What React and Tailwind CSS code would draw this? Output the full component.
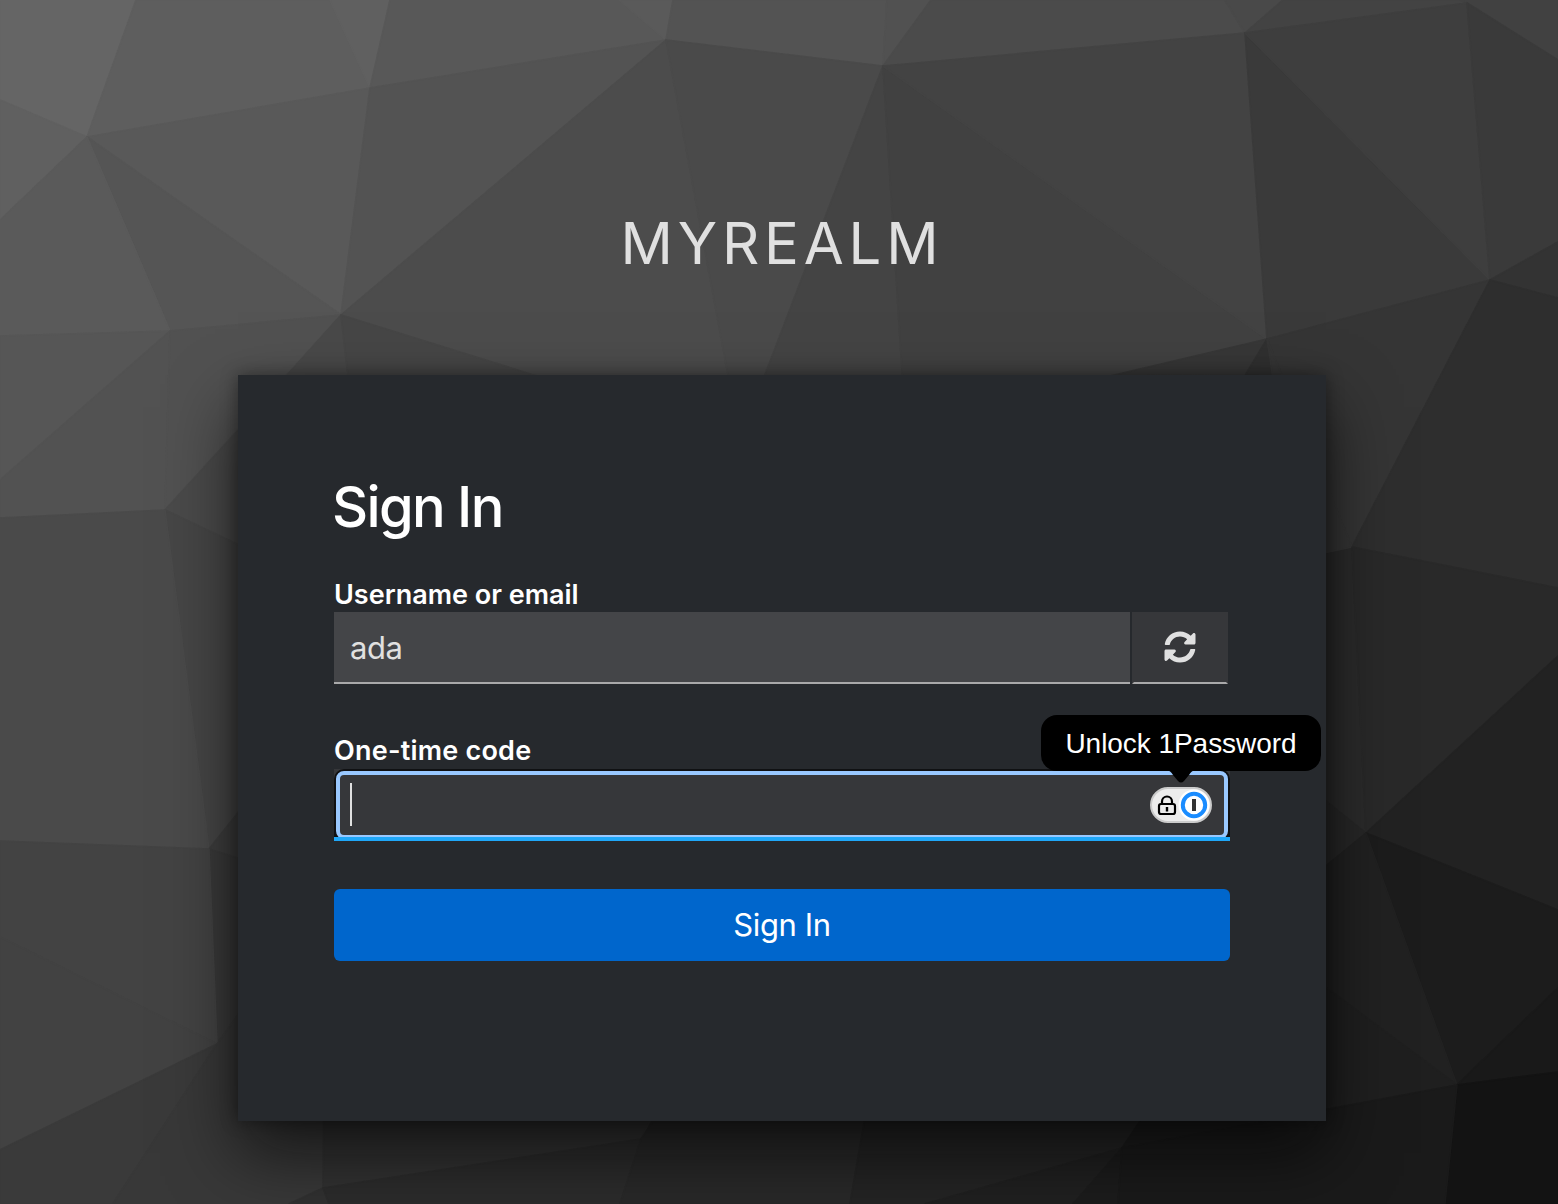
import React, { useState } from 'react';
import { FaSyncAlt } from 'react-icons/fa';

const facets = [
  { points: '0,0 136,0 87,137 0,100', fill: '#656565' },
  { points: '0,100 87,137 0,220', fill: '#606060' },
  { points: '136,0 330,0 370,88 87,137', fill: '#5e5e5e' },
  { points: '330,0 390,0 370,88', fill: '#606060' },
  { points: '390,0 619,0 666,40 370,88', fill: '#585858' },
  { points: '619,0 673,0 666,40', fill: '#5a5a5a' },
  { points: '673,0 887,0 883,66 666,40', fill: '#535353' },
  { points: '887,0 931,0 883,66', fill: '#515151' },
  { points: '931,0 1225,0 1245,33 883,66', fill: '#4b4b4b' },
  { points: '1225,0 1283,0 1245,33', fill: '#494949' },
  { points: '1283,0 1460,0 1467,3 1245,33', fill: '#434343' },
  { points: '1460,0 1558,0 1558,60 1467,3', fill: '#414141' },
  { points: '87,137 370,88 341,315', fill: '#595959' },
  { points: '87,137 341,315 170,331', fill: '#555555' },
  { points: '0,220 87,137 170,331 0,336', fill: '#5a5a5a' },
  { points: '370,88 666,40 341,315', fill: '#535353' },
  { points: '341,315 666,40 740,440', fill: '#4c4c4c' },
  { points: '666,40 883,66 740,440', fill: '#4a4a4a' },
  { points: '883,66 910,500 740,440', fill: '#444444' },
  { points: '883,66 1267,339 906,435', fill: '#414141' },
  { points: '883,66 1245,33 1267,339', fill: '#434343' },
  { points: '1245,33 1490,280 1267,339', fill: '#3a3a3a' },
  { points: '1245,33 1467,3 1490,280', fill: '#3e3e3e' },
  { points: '1467,3 1558,60 1558,242 1490,280', fill: '#3a3a3a' },
  { points: '1490,280 1558,242 1558,298', fill: '#333333' },
  { points: '1267,339 1245,375 1110,376', fill: '#373737' },
  { points: '1267,339 1281,380 1240,384', fill: '#303030' },
  { points: '1267,339 1490,280 1352,547', fill: '#353535' },
  { points: '1490,280 1558,298 1558,588 1352,547', fill: '#2e2e2e' },
  { points: '0,336 170,331 0,480', fill: '#565656' },
  { points: '0,480 170,331 165,510 0,518', fill: '#525252' },
  { points: '170,331 341,315 165,510', fill: '#515151' },
  { points: '341,315 353,400 260,405', fill: '#494949' },
  { points: '341,315 540,377 350,395', fill: '#464646' },
  { points: '165,510 260,406 260,555', fill: '#4a4a4a' },
  { points: '165,510 260,555 260,790 209,849', fill: '#464646' },
  { points: '0,518 165,510 209,849 0,841', fill: '#4a4a4a' },
  { points: '209,849 260,785 260,865', fill: '#3e3e3e' },
  { points: '209,849 260,865 260,985 217,1044', fill: '#3a3a3a' },
  { points: '0,841 209,849 217,1044 0,937', fill: '#434343' },
  { points: '0,937 217,1044 0,1150', fill: '#424242' },
  { points: '0,1150 217,1044 113,1204 0,1204', fill: '#3a3a3a' },
  { points: '217,1044 260,985 324,1100 323,1188 289,1204 113,1204', fill: '#383838' },
  { points: '289,1204 323,1188 329,1204', fill: '#313131' },
  { points: '324,1100 660,1100 641,1139 323,1188', fill: '#323232' },
  { points: '323,1188 641,1139 620,1204 329,1204', fill: '#2c2c2c' },
  { points: '641,1139 668,1100 868,1100 850,1204 620,1204', fill: '#292929' },
  { points: '868,1100 1154,1100 1122,1148 925,1204 850,1204', fill: '#242424' },
  { points: '1122,1148 1073,1204 925,1204', fill: '#202020' },
  { points: '1122,1148 1118,1204 1073,1204', fill: '#1c1c1c' },
  { points: '1154,1100 1300,1100 1300,1115 1122,1148', fill: '#1c1c1c' },
  { points: '1300,542 1352,547 1366,833 1300,784', fill: '#2b2b2b' },
  { points: '1267,339 1352,547 1300,558', fill: '#353535' },
  { points: '1352,547 1558,588 1558,656 1366,833', fill: '#292929' },
  { points: '1366,833 1558,656 1558,910', fill: '#222222' },
  { points: '1300,780 1366,833 1300,887', fill: '#272727' },
  { points: '1366,833 1558,910 1558,988 1457,1085', fill: '#1c1c1c' },
  { points: '1300,887 1366,833 1457,1085 1300,968', fill: '#212121' },
  { points: '1300,968 1457,1085 1300,1114', fill: '#1f1f1f' },
  { points: '1457,1085 1558,988 1558,1072', fill: '#191919' },
  { points: '1457,1085 1558,1072 1558,1204 1445,1204', fill: '#131313' },
  { points: '1122,1148 1457,1085 1445,1204 1118,1204', fill: '#1a1a1a' },
];

const Backdrop = () => (
  <svg className="absolute inset-0 w-full h-full" viewBox="0 0 1558 1204" preserveAspectRatio="xMidYMid slice" aria-hidden="true">
    {facets.map((facet) => (
      <polygon
        key={facet.points}
        points={facet.points}
        fill={facet.fill}
        stroke={facet.fill}
        strokeWidth="1.6"
        strokeLinejoin="round"
      />
    ))}
  </svg>
);

const UnlockBadge = () => (
  <svg className="block w-[62px] h-9" viewBox="0 0 62 36" fill="none">
    <rect x="1" y="1" width="60" height="34" rx="17" fill="#ececec" stroke="#cbcbcb" strokeWidth="2" />
    <circle cx="44" cy="18" r="15.5" fill="#fff" />
    <rect x="9" y="17" width="16" height="10" rx="2" stroke="#000" strokeWidth="2.2" />
    <path d="M12 17v-2.500a5 5 0 0 1 10 0v2.500" stroke="#000" strokeWidth="2.2" />
    <path d="M17 20v4.500" stroke="#000" strokeWidth="2.4" />
    <circle cx="44" cy="18" r="11.200" stroke="#1a8cff" strokeWidth="4" />
    <rect x="42" y="12" width="4" height="12" fill="#333" />
  </svg>
);

const App = () => {
  const [username] = useState('ada');

  return (
    <div className="relative w-full h-[1204px] overflow-hidden bg-[#2b2b2b] font-['Inter',sans-serif]">
      <Backdrop />

      <div className="relative flex flex-col items-center pl-1.5">
        <header className="h-[375px] pt-[207px]">
          <h1 className="text-[58px] leading-[72px] tracking-[4.8px] text-[#e0e0e0] whitespace-nowrap">MYREALM</h1>
        </header>

        <main className="w-[1088px] h-[746px] px-24 pt-24 bg-[#26292d] shadow-[0_32px_64px_rgba(3,3,3,0.64),0_0_16px_rgba(3,3,3,0.4)]">
          <h2 className="-ml-0.5 h-[73px] text-[56px] leading-[73px] font-medium tracking-[-1.7px] text-white">Sign In</h2>

          <form className="flex flex-col" onSubmit={(e) => e.preventDefault()}>
            <label className="mt-[30px] h-[38px] text-[27px] leading-[41px] font-semibold text-white">Username or email</label>
            <div className="flex gap-0.5 h-[72px]">
              <div className="w-[796px] pl-4 bg-[#444548] border-b-2 border-[#a9a9aa] text-[31px] leading-[72px] tracking-[-0.5px] text-[#e0e0e0]">
                {username}
              </div>
              <button
                type="button"
                className="flex w-24 items-center justify-center bg-[#36373a] border-x-2 border-b-2 border-x-transparent border-b-[#a9a9aa]"
              >
                <FaSyncAlt className="size-8 text-[#e0e0e0]" />
              </button>
            </div>

            <label className="mt-[47px] h-[38px] text-[27px] leading-[39px] font-semibold tracking-[0.22px] text-white">One-time code</label>
            <div className="relative h-[72px] bg-[#36373a] border-b-4 border-[#1fa7f8]">
              <div className="h-full pt-0.5 px-0.5 overflow-hidden rounded-t-[10px] bg-[#101113]">
                <div className="flex h-[68px] items-start justify-between rounded-lg border-4 border-[#99c8ff] bg-[#36373a] pl-2.5 pr-3">
                  <span className="mt-2 w-0.5 h-[43px] bg-[#e0e0e0]" />
                  <span className="mt-3">
                    <UnlockBadge />
                  </span>
                </div>
              </div>
              <div className="absolute right-[-91px] -top-[54px] flex w-[280px] h-14 items-center justify-center rounded-2xl bg-black pt-0.5 font-['Liberation_Sans',sans-serif] text-[28px] tracking-[-0.05px] text-white whitespace-nowrap">
                Unlock 1Password
                <svg className="absolute top-[55px] left-[126px] w-7 h-[13px]" viewBox="0 0 28 13">
                  <path d="M0 0c3 1 4 2 6 5l5 6q3 3 6 0l5-6c2-3 3-4 6-5z" fill="#000" />
                </svg>
              </div>
            </div>

            <button type="submit" className="mt-12 h-[72px] rounded-md bg-[#0066cc] text-[31px] leading-[72px] tracking-[-0.4px] text-white">
              Sign In
            </button>
          </form>
        </main>
      </div>
    </div>
  );
};

export default App;
